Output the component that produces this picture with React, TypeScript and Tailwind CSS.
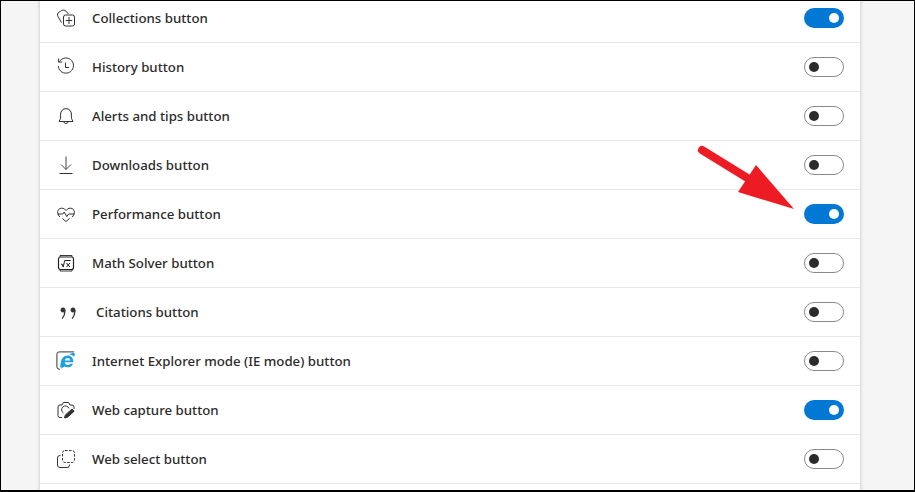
const CollectionsIcon = () => (
  <svg width="20" height="20" viewBox="0 0 20 20" fill="none" stroke="#333" strokeWidth="1">
    <path d="M5.500 14.500 2 8.500C1 6.800 1.500 5 3 4.200l2.300-1.500C7 1.700 8.800 2 10 3.200L12.500 6" />
    <rect x="7.500" y="7" width="11" height="11" rx="2" />
    <path d="M13 9v7M9.800 12.500h6.400" />
  </svg>
);

const HistoryIcon = () => (
  <svg width="20" height="20" viewBox="0 0 20 20" fill="none" stroke="#333" strokeWidth="1">
    <path d="M3.400 4.600A7.600 7.600 0 1 1 2.300 9" />
    <path d="M2.600 1.500v3.600h3.600" />
    <path d="M9.500 5.500v5h3.500" />
  </svg>
);

const BellIcon = () => (
  <svg width="20" height="20" viewBox="0 0 20 20" fill="none" stroke="#333" strokeWidth="1">
    <path d="M3 15.500h14l-1.600-3.200V8a5.400 5.400 0 0 0-10.800 0v4.300Z" strokeLinejoin="round" />
    <path d="M7.700 15.800a2.400 2.400 0 0 0 4.600 0" />
  </svg>
);

const DownloadIcon = () => (
  <svg width="20" height="20" viewBox="0 0 20 20" fill="none" stroke="#444" strokeWidth="1">
    <path d="M10 1.500v13M5 9.500l5 5 5-5" />
    <path d="M3.500 18.500h13" stroke="#333" />
  </svg>
);

const HeartIcon = () => (
  <svg width="20" height="20" viewBox="0 0 20 20" fill="none" stroke="#333" strokeWidth="1">
    <path d="M3.800 13 3 12C.9 9.500 1.500 5.800 3.600 4.700c2.200-1.200 4.900-.4 6.400 1.800 1.500-2.200 4.200-3 6.400-1.800 2.100 1.100 2.700 4.800.6 7.300l-.8 1" />
    <path d="M1.800 10h5l1.400-2 2.600 4.600 1.700-2.600h5.700" />
    <path d="M6.400 14.400 10 17.600l3.600-3.200" />
  </svg>
);

const MathIcon = () => (
  <svg width="20" height="20" viewBox="0 0 20 20" fill="none" stroke="#222" strokeWidth="1">
    <rect x="2.500" y="4" width="15" height="12.500" rx="2" strokeWidth="1.200" />
    <path d="M4 4V2.500h12V4M4 16.500V18h12v-1.500" strokeWidth="0.900" />
    <path d="M5 11.500l1-.5 1.200 3 1.500-6.500h6" />
    <path d="M10.500 10l3.400 4M13.900 10l-3.400 4" />
  </svg>
);

const QuoteIcon = () => (
  <svg width="20" height="20" viewBox="0 0 20 20" fill="#333" stroke="#333">
    <circle cx="7" cy="8" r="2.200" strokeWidth="0.600" />
    <path d="M9 8.500c0 3.200-1 5.800-2.800 8.200" fill="none" strokeWidth="1.300" />
    <circle cx="17" cy="8" r="2.200" strokeWidth="0.600" />
    <path d="M19 8.500c0 3.200-1 5.800-2.800 8.200" fill="none" strokeWidth="1.300" />
  </svg>
);

const IEIcon = () => (
  <svg width="22" height="22" viewBox="0 0 22 22" fill="none">
    <path d="M20 1H3.500A2.500 2.500 0 0 0 1 3.500v14A2.500 2.500 0 0 0 3.500 20h1" stroke="#333" strokeWidth="1.100" />
    <path
      d="M5.500 12.200c.3-4.200 3.600-7.300 7.500-7.300 3.500 0 6 2.700 6 6.400v1.200h-9.400c.2 1.800 1.500 2.900 3.200 2.900 1.300 0 2.300-.5 2.900-1.500h3c-.9 2.500-3.100 4-6 4-1.300 0-2.400-.3-3.300-.9-1.500 1.100-3.500 2-4.400 1.100-1-1 .1-3.600.5-5.900Zm4.200-1.700h6.100c-.2-1.700-1.400-2.900-3-2.900s-2.800 1.200-3.100 2.900Z"
      fill="#1ba1e2"
      fillRule="evenodd"
    />
    <path d="M14.500 3.800c2.500-1.600 5.500-2.100 6.200-1 .4.800-.1 2.300-1 3.600-.9-1.300-2.400-2.200-5.200-2.600Z" fill="#1ba1e2" />
  </svg>
);

const CaptureIcon = () => (
  <svg width="20" height="20" viewBox="0 0 20 20" fill="none" stroke="#333" strokeWidth="1">
    <path d="M6 17.500H4a2 2 0 0 1-2-2V7a2 2 0 0 1 2-2h2l1.300-2.500h5.400L14 5h2a2 2 0 0 1 2 2v2" />
    <path d="M7.500 13a3.800 3.800 0 1 1 5.500-4.500" />
    <path d="M8.500 18l.8-3 6.700-6 2.200 2.200-6.700 6Z" fill="#333" />
  </svg>
);

const SelectIcon = () => (
  <svg width="20" height="20" viewBox="0 0 20 20" fill="none" stroke="#333" strokeWidth="1">
    <rect x="6.500" y="1.500" width="12" height="12" rx="2.500" strokeDasharray="2.500 1.500" />
    <path d="M4.500 6.500H4A2.500 2.500 0 0 0 1.500 9v7A2.500 2.500 0 0 0 4 18.500h7a2.500 2.500 0 0 0 2.500-2.500v-.5" />
  </svg>
);

const rows = [
  { label: "Collections button", icon: <CollectionsIcon />, on: true },
  { label: "History button", icon: <HistoryIcon />, on: false },
  { label: "Alerts and tips button", icon: <BellIcon />, on: false },
  { label: "Downloads button", icon: <DownloadIcon />, on: false },
  { label: "Performance button", icon: <HeartIcon />, on: true },
  { label: "Math Solver button", icon: <MathIcon />, on: false },
  { label: "Citations button", icon: <QuoteIcon />, on: false, indent: true },
  { label: "Internet Explorer mode (IE mode) button", icon: <IEIcon />, on: false },
  { label: "Web capture button", icon: <CaptureIcon />, on: true },
  { label: "Web select button", icon: <SelectIcon />, on: false },
];

function Toggle({ on }: { on: boolean }) {
  if (on) {
    return (
      <div className="flex h-5 w-10 items-center justify-end rounded-full bg-[#0078d4] pr-[5px]">
        <div className="h-2.5 w-2.5 rounded-full bg-white" />
      </div>
    );
  }
  return (
    <div className="flex h-5 w-10 items-center rounded-full border border-[#8a8a8a] bg-white pl-1">
      <div className="h-2.5 w-2.5 rounded-full bg-[#2b2b2b]" />
    </div>
  );
}

export default function App() {
  return (
    <div className="relative h-[492px] w-[915px] overflow-hidden border-t border-r border-l border-b-2 border-black bg-[#f5f5f5] font-['Noto_Sans',sans-serif]">
      <div className="mx-[39px] -mt-[7px] w-[820px] bg-white shadow-[0_0_4px_rgba(0,0,0,0.22)]">
        {rows.map((row) => (
          <div key={row.label} className="flex h-[49px] items-center border-b border-[#e8e8e8] px-4">
            <div className="flex w-5 shrink-0 items-center justify-center">{row.icon}</div>
            <div className={`flex-1 pt-0.5 text-[13.25px] font-medium text-[#2b2b2b] ${row.indent ? "pl-5" : "pl-4"}`}>
              {row.label}
            </div>
            <Toggle on={row.on} />
          </div>
        ))}
        <div className="h-3" />
      </div>
      <svg className="absolute top-0 left-0" width="915" height="492" viewBox="0 0 915 492" fill="none">
        <path d="M701 149 L748 178" stroke="#ed1c24" strokeWidth="8" strokeLinecap="round" />
        <path d="M755 164 L793 208 L737 191 Z" fill="#ed1c24" />
      </svg>
    </div>
  );
}
